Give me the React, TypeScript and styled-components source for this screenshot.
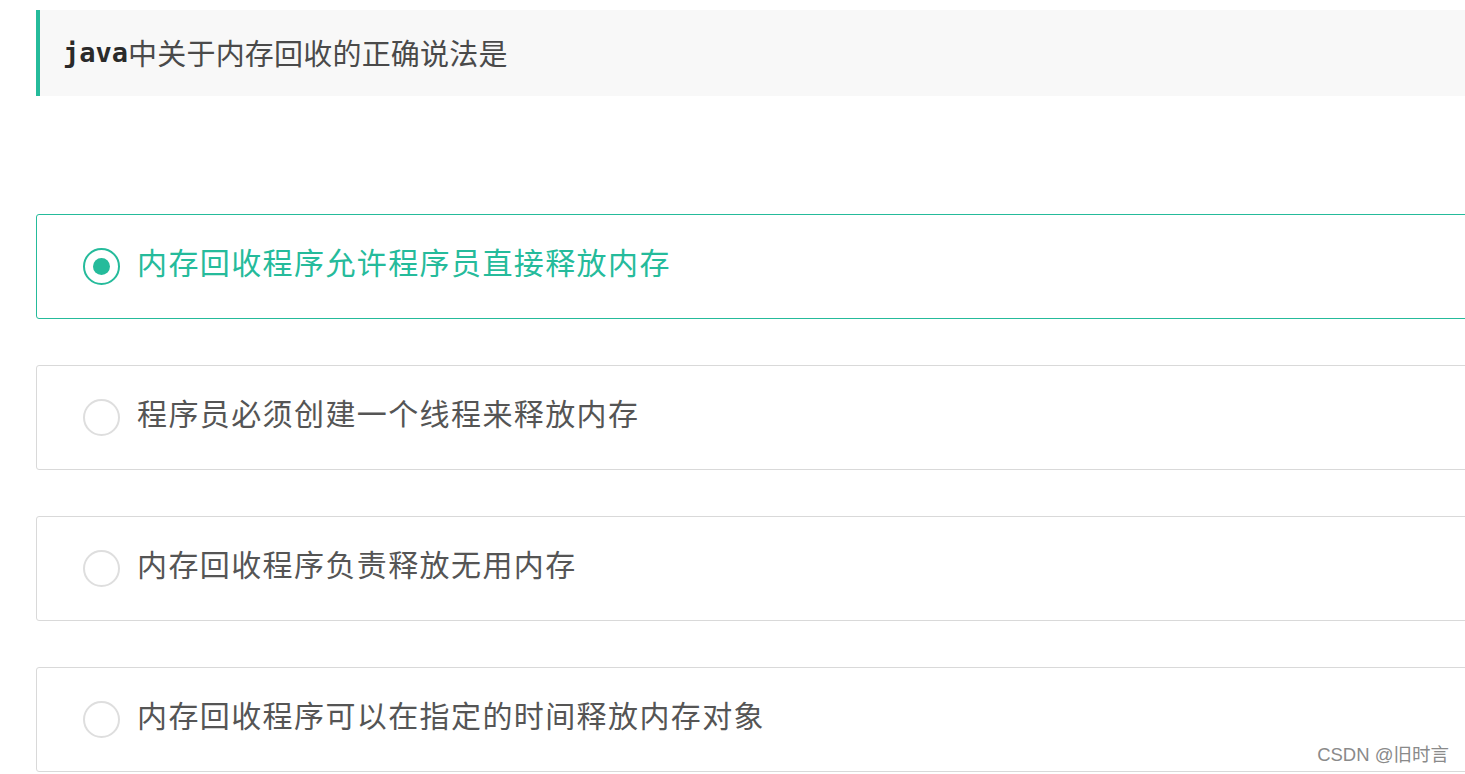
import React from "react";
import styled, { createGlobalStyle } from "styled-components";

const Global = createGlobalStyle`
  html, body { margin: 0; padding: 0; background: #ffffff; overflow: hidden; }
  body { font-family: "Noto Sans CJK SC", "Noto Sans", sans-serif; }
`;

const Page = styled.div`
  position: relative;
  width: 1465px;
  height: 774px;
  overflow: hidden;
  padding: 10px 0 0 36px;
  box-sizing: border-box;
`;

const Question = styled.div`
  width: 1500px;
  height: 86px;
  box-sizing: border-box;
  background: #f8f8f8;
  border-left: 4px solid #25bb9b;
  padding-left: 23px;
  padding-bottom: 2px;
  display: flex;
  align-items: center;
  font-size: 29px;
  color: #4a4a4a;
  font-family: "Noto Sans CJK SC", serif;
  letter-spacing: 0.2px;
`;

const Code = styled.span`
  font-family: "DejaVu Sans Mono", "Liberation Mono", monospace;
  font-size: 27px;
  font-weight: 600;
  color: #2a2a2a;
  letter-spacing: 0;
`;

const Options = styled.div`
  display: flex;
  flex-direction: column;
  gap: 46px;
  margin-top: 118px;
`;

const Option = styled.div<{ $active?: boolean }>`
  width: 1500px;
  height: 105px;
  box-sizing: border-box;
  border: 1px solid ${(p) => (p.$active ? "#25bb9b" : "#d9d9d9")};
  border-radius: 3px;
  display: flex;
  align-items: center;
  padding-left: 46px;
  gap: 17px;
`;

const Radio = styled.span<{ $active?: boolean }>`
  width: 37px;
  height: 37px;
  flex: none;
  box-sizing: border-box;
  border-radius: 50%;
  border: 2px solid ${(p) => (p.$active ? "#25bb9b" : "#dedede")};
  display: flex;
  align-items: center;
  justify-content: center;
  &::after {
    content: "";
    display: ${(p) => (p.$active ? "block" : "none")};
    width: 17px;
    height: 17px;
    border-radius: 50%;
    background: #25bb9b;
  }
`;

const Label = styled.span<{ $active?: boolean }>`
  font-size: 30px;
  letter-spacing: 1.4px;
  margin-bottom: 12px;
  color: ${(p) => (p.$active ? "#25bb9b" : "#555555")};
  font-family: "Noto Sans CJK SC", sans-serif;
  white-space: nowrap;
`;

const Watermark = styled.div`
  position: absolute;
  right: 16px;
  bottom: 8px;
  font-family: "Liberation Sans", "Noto Sans CJK SC", sans-serif;
  font-size: 18.5px;
  color: #8a8a8a;
`;

const options = [
  "内存回收程序允许程序员直接释放内存",
  "程序员必须创建一个线程来释放内存",
  "内存回收程序负责释放无用内存",
  "内存回收程序可以在指定的时间释放内存对象",
];

export default function App() {
  return (
    <Page>
      <Global />
      <Question>
        <Code>java</Code>中关于内存回收的正确说法是
      </Question>
      <Options>
        {options.map((o, i) => (
          <Option key={i} $active={i === 0}>
            <Radio $active={i === 0} />
            <Label $active={i === 0}>{o}</Label>
          </Option>
        ))}
      </Options>
      <Watermark>CSDN @旧时言</Watermark>
    </Page>
  );
}
